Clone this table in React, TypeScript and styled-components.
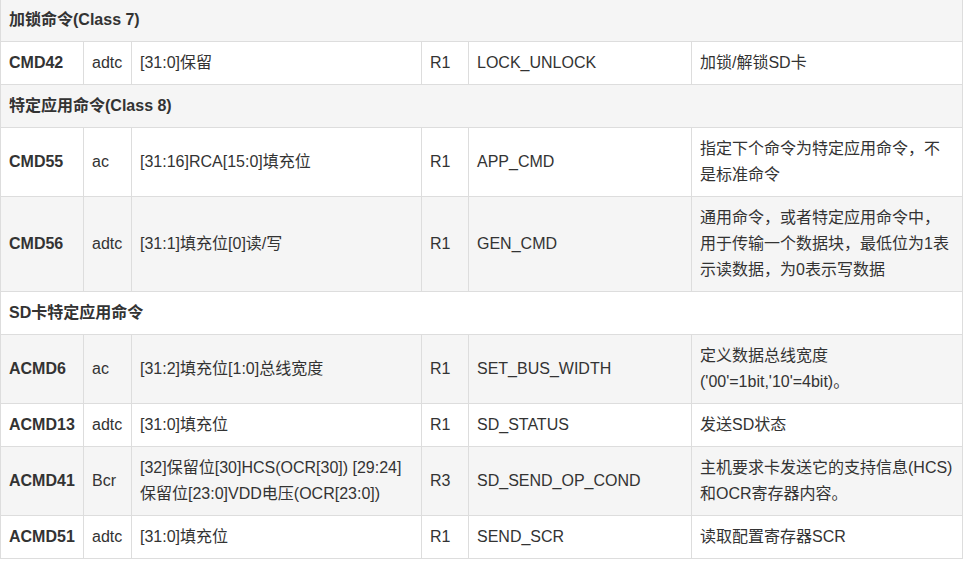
import React from "react";
import styled, { createGlobalStyle } from "styled-components";

const GlobalStyle = createGlobalStyle`
  body {
    margin: 0;
    background: #fff;
    font-family: "Liberation Sans", Arial, "Noto Sans CJK SC", sans-serif;
  }
`;

const Table = styled.table`
  width: 962px;
  table-layout: fixed;
  border-collapse: collapse;
  font-size: 16px;
  line-height: 26px;
  color: #333;

  tr:nth-child(odd) {
    background-color: #f5f5f5;
  }
  // top of the table is cut off in the shot
  tr:first-child td {
    border-top: none;
    padding-top: 7px;
  }
`;

const Cell = styled.td<{ $bold?: boolean }>`
  padding: 8px;
  border: 1px solid #ddd;
  vertical-align: middle;
  font-weight: ${(p) => (p.$bold ? "bold" : "normal")};
  word-wrap: break-word;
`;

const SectionCell = styled(Cell).attrs({ colSpan: 6 })`
  font-weight: bold;
`;

type Cmd = {
  name: string;
  type: string;
  arg: string;
  resp: string;
  abbr: string;
  desc: string;
};

type Section = { title: string; rows: Cmd[] };

const sections: Section[] = [
  {
    title: "加锁命令(Class 7)",
    rows: [
      {
        name: "CMD42",
        type: "adtc",
        arg: "[31:0]保留",
        resp: "R1",
        abbr: "LOCK_UNLOCK",
        desc: "加锁/解锁SD卡",
      },
    ],
  },
  {
    title: "特定应用命令(Class 8)",
    rows: [
      {
        name: "CMD55",
        type: "ac",
        arg: "[31:16]RCA[15:0]填充位",
        resp: "R1",
        abbr: "APP_CMD",
        desc: "指定下个命令为特定应用命令，不是标准命令",
      },
      {
        name: "CMD56",
        type: "adtc",
        arg: "[31:1]填充位[0]读/写",
        resp: "R1",
        abbr: "GEN_CMD",
        desc: "通用命令，或者特定应用命令中，用于传输一个数据块，最低位为1表示读数据，为0表示写数据",
      },
    ],
  },
  {
    title: "SD卡特定应用命令",
    rows: [
      {
        name: "ACMD6",
        type: "ac",
        arg: "[31:2]填充位[1:0]总线宽度",
        resp: "R1",
        abbr: "SET_BUS_WIDTH",
        desc: "定义数据总线宽度('00'=1bit,'10'=4bit)。",
      },
      {
        name: "ACMD13",
        type: "adtc",
        arg: "[31:0]填充位",
        resp: "R1",
        abbr: "SD_STATUS",
        desc: "发送SD状态",
      },
      {
        name: "ACMD41",
        type: "Bcr",
        arg: "[32]保留位[30]HCS(OCR[30]) [29:24]保留位[23:0]VDD电压(OCR[23:0])",
        resp: "R3",
        abbr: "SD_SEND_OP_COND",
        desc: "主机要求卡发送它的支持信息(HCS)和OCR寄存器内容。",
      },
      {
        name: "ACMD51",
        type: "adtc",
        arg: "[31:0]填充位",
        resp: "R1",
        abbr: "SEND_SCR",
        desc: "读取配置寄存器SCR",
      },
    ],
  },
];

const colWidths = [83, 48, 290, 47, 223, 271];

const App = () => {
  return (
    <>
      <GlobalStyle />
      <Table>
        <colgroup>
          {colWidths.map((w, i) => (
            <col key={i} style={{ width: w }} />
          ))}
        </colgroup>
        <tbody>
          {sections.map((s) => (
            <React.Fragment key={s.title}>
              <tr>
                <SectionCell>{s.title}</SectionCell>
              </tr>
              {s.rows.map((r) => (
                <tr key={r.name}>
                  <Cell $bold>{r.name}</Cell>
                  <Cell>{r.type}</Cell>
                  <Cell>{r.arg}</Cell>
                  <Cell>{r.resp}</Cell>
                  <Cell>{r.abbr}</Cell>
                  <Cell>{r.desc}</Cell>
                </tr>
              ))}
            </React.Fragment>
          ))}
        </tbody>
      </Table>
    </>
  );
};

export default App;
